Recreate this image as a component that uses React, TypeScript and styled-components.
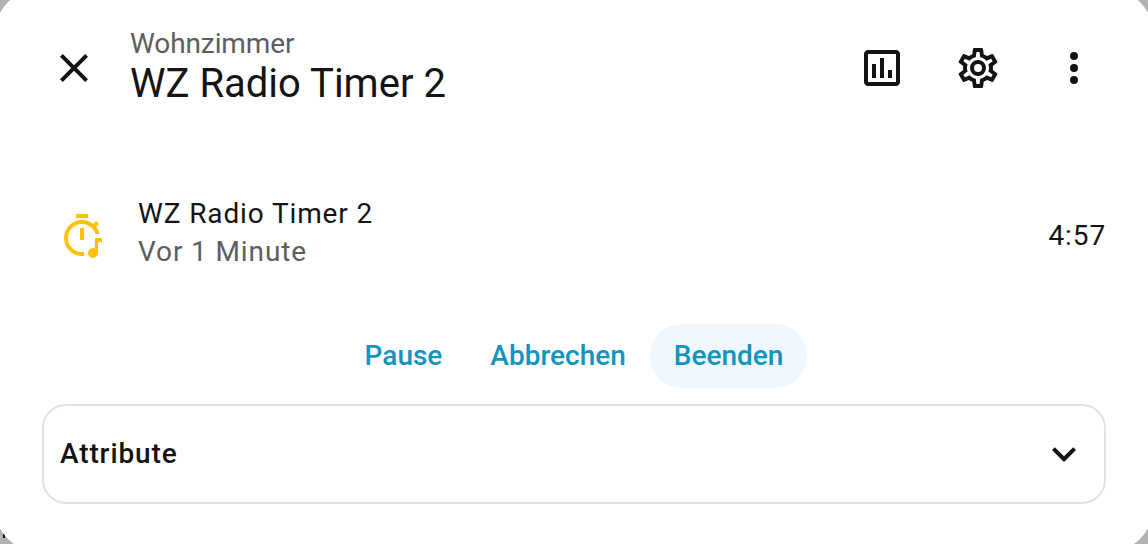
import React from 'react';
import styled, { createGlobalStyle } from 'styled-components';

const GlobalStyle = createGlobalStyle`
  * {
    box-sizing: border-box;
  }

  body {
    margin: 0;
    overflow: hidden;
    background-color: #b2b2b2;
    font-family: Roboto, 'Noto Sans', sans-serif;
    color: #141414;
  }
`;

const Backdrop = styled.div`
  position: relative;
  display: flex;
  height: 544px;
  overflow: hidden;
  background-color: #b2b2b2;
`;

// bit of the page that peeks out below the dialog corner
const PageFragment = styled.span`
  position: absolute;
  left: 3px;
  bottom: 6px;
  width: 2px;
  height: 4px;
  background-color: #141414;
`;

const Dialog = styled.div`
  position: relative;
  flex: 1;
  margin: -12px -6px -9px;
  padding: 12px 6px 9px;
  border-radius: 48px;
  background-color: #fff;
`;

const Header = styled.header`
  display: flex;
  align-items: center;
  height: 136px;
  padding: 0 50px;
`;

const Titles = styled.div`
  flex: 1;
  padding: 0 0 5px 32px;
`;

const Subtitle = styled.div`
  font-size: 28px;
  line-height: 36px;
  letter-spacing: -0.1px;
  color: #5e5e5e;
`;

const Title = styled.h1`
  margin: 0;
  font-size: 40px;
  font-weight: 400;
  line-height: 44px;
`;

const Actions = styled.div`
  display: flex;
  gap: 48px;
`;

const IconButton = styled.button`
  display: flex;
  padding: 0;
  border: none;
  background: none;
  color: inherit;
  cursor: pointer;
`;

const Icon = styled.svg`
  display: block;
  width: 48px;
  height: 48px;
  fill: currentColor;
`;

const StateRow = styled.div`
  display: flex;
  align-items: center;
  height: 80px;
  margin-top: 58px;
  padding: 0 42px 0 58px;
`;

const StateIcon = styled.div`
  margin-top: 4px;
  color: #ffc107;
`;

const StateInfo = styled.div`
  flex: 1;
  padding: 0 0 2px 32px;
  font-size: 28px;
  line-height: 38px;
  letter-spacing: 0.875px;
`;

const Secondary = styled.div`
  color: #5e5e5e;
`;

const Remaining = styled.div`
  padding-top: 2px;
  font-size: 28px;
  letter-spacing: 0.875px;
`;

const ButtonRow = styled.div`
  display: flex;
  justify-content: center;
  margin-top: 50px;
`;

const TextButton = styled.button<{ $active?: boolean }>`
  height: 64px;
  padding: 0 24px 2px;
  border: none;
  border-radius: 32px;
  background-color: ${props => props.$active ? '#eff8ff' : 'transparent'};
  color: #1194be;
  font-family: inherit;
  font-size: 28px;
  font-weight: 500;
  cursor: pointer;
`;

const AttributePanel = styled.div`
  display: flex;
  align-items: center;
  justify-content: space-between;
  height: 100px;
  margin: 16px 42px 0;
  padding: 0 16px;
  border: 2px solid #e2e2e2;
  border-radius: 24px;
`;

const PanelTitle = styled.div`
  padding-bottom: 2px;
  font-size: 28px;
  font-weight: 500;
  letter-spacing: 0.875px;
`;

const icons = {
  close: 'M19,6.41L17.59,5L12,10.59L6.41,5L5,6.41L10.59,12L5,17.59L6.41,19L12,13.41L17.59,19L19,17.59L13.41,12L19,6.41Z',
  chart: 'M9 17H7V10H9V17M13 17H11V7H13V17M17 17H15V13H17V17M19 19H5V5H19V19.1M19 3H5C3.9 3 3 3.9 3 5V19C3 20.1 3.9 21 5 21H19C20.1 21 21 20.1 21 19V5C21 3.9 20.1 3 19 3Z',
  cog: 'M12,8A4,4 0 0,1 16,12A4,4 0 0,1 12,16A4,4 0 0,1 8,12A4,4 0 0,1 12,8M12,10A2,2 0 0,0 10,12A2,2 0 0,0 12,14A2,2 0 0,0 14,12A2,2 0 0,0 12,10M10,22C9.75,22 9.54,21.82 9.5,21.58L9.13,18.93C8.5,18.68 7.96,18.34 7.44,17.94L4.95,18.95C4.73,19.03 4.46,18.95 4.34,18.73L2.34,15.27C2.21,15.05 2.27,14.78 2.46,14.63L4.57,12.97L4.5,12L4.57,11L2.46,9.37C2.27,9.22 2.21,8.95 2.34,8.73L4.34,5.27C4.46,5.05 4.73,4.96 4.95,5.05L7.44,6.05C7.96,5.66 8.5,5.32 9.13,5.07L9.5,2.42C9.54,2.18 9.75,2 10,2H14C14.25,2 14.46,2.18 14.5,2.42L14.87,5.07C15.5,5.32 16.04,5.66 16.56,6.05L19.05,5.05C19.27,4.96 19.54,5.05 19.66,5.27L21.66,8.73C21.79,8.95 21.73,9.22 21.54,9.37L19.43,11L19.5,12L19.43,13L21.54,14.63C21.73,14.78 21.79,15.05 21.66,15.27L19.66,18.73C19.54,18.95 19.27,19.04 19.05,18.95L16.56,17.95C16.04,18.34 15.5,18.68 14.87,18.93L14.5,21.58C14.46,21.82 14.25,22 14,22H10M11.25,4L10.88,6.61C9.68,6.86 8.62,7.5 7.85,8.39L5.44,7.35L4.69,8.6L6.8,10.15C6.4,11.37 6.4,12.64 6.8,13.8L4.68,15.36L5.43,16.61L7.86,15.57C8.63,16.46 9.68,17.1 10.87,17.34L11.24,20H12.76L13.13,17.35C14.32,17.1 15.37,16.46 16.14,15.57L18.57,16.61L19.32,15.36L17.2,13.81C17.6,12.64 17.6,11.37 17.2,10.15L19.31,8.6L18.56,7.35L16.15,8.39C15.38,7.5 14.32,6.86 13.12,6.62L12.75,4H11.25Z',
  dots: 'M12,16A2,2 0 0,1 14,18A2,2 0 0,1 12,20A2,2 0 0,1 10,18A2,2 0 0,1 12,16M12,10A2,2 0 0,1 14,12A2,2 0 0,1 12,14A2,2 0 0,1 10,12A2,2 0 0,1 12,10M12,4A2,2 0 0,1 14,6A2,2 0 0,1 12,8A2,2 0 0,1 10,6A2,2 0 0,1 12,4Z',
  timerMusic: 'M15 1H9V3H15V1M11 8V14H13V8H11M12 4A9 9 0 0 0 12 22C12.34 22 12.67 22 13 21.95V19.93C12.67 19.98 12.34 20 12 20A7 7 0 0 1 12 6C15.17 6 17.84 8.11 18.71 11H20.78C20.49 9.65 19.9 8.43 19.03 7.39L20.45 5.97C20 5.46 19.55 5 19.04 4.56L17.62 6C16.07 4.74 14.12 4 12 4M22 13V15H20V20.5A2.5 2.5 0 1 1 18.5 18.2V13H22Z',
  chevronDown: 'M7.41,8.58L12,13.17L16.59,8.58L18,10L12,16L6,10L7.41,8.58Z',
};

interface MdiIconProps {
  name: keyof typeof icons;
}

const MdiIcon: React.FC<MdiIconProps> = ({ name }) => (
  <Icon viewBox="0 0 24 24">
    <path d={icons[name]} />
  </Icon>
);

const App: React.FC = () => {
  return (
    <>
      <GlobalStyle />
      <Backdrop>
        <PageFragment />
        <Dialog>
          <Header>
            <IconButton aria-label="Schließen"><MdiIcon name="close" /></IconButton>
            <Titles>
              <Subtitle>Wohnzimmer</Subtitle>
              <Title>WZ Radio Timer 2</Title>
            </Titles>
            <Actions>
              <IconButton><MdiIcon name="chart" /></IconButton>
              <IconButton><MdiIcon name="cog" /></IconButton>
              <IconButton><MdiIcon name="dots" /></IconButton>
            </Actions>
          </Header>
          <StateRow>
            <StateIcon><MdiIcon name="timerMusic" /></StateIcon>
            <StateInfo>
              <div>WZ Radio Timer 2</div>
              <Secondary>Vor 1 Minute</Secondary>
            </StateInfo>
            <Remaining>4:57</Remaining>
          </StateRow>
          <ButtonRow>
            <TextButton>Pause</TextButton>
            <TextButton>Abbrechen</TextButton>
            <TextButton $active>Beenden</TextButton>
          </ButtonRow>
          <AttributePanel>
            <PanelTitle>Attribute</PanelTitle>
            <MdiIcon name="chevronDown" />
          </AttributePanel>
        </Dialog>
      </Backdrop>
    </>
  );
};

export default App;
